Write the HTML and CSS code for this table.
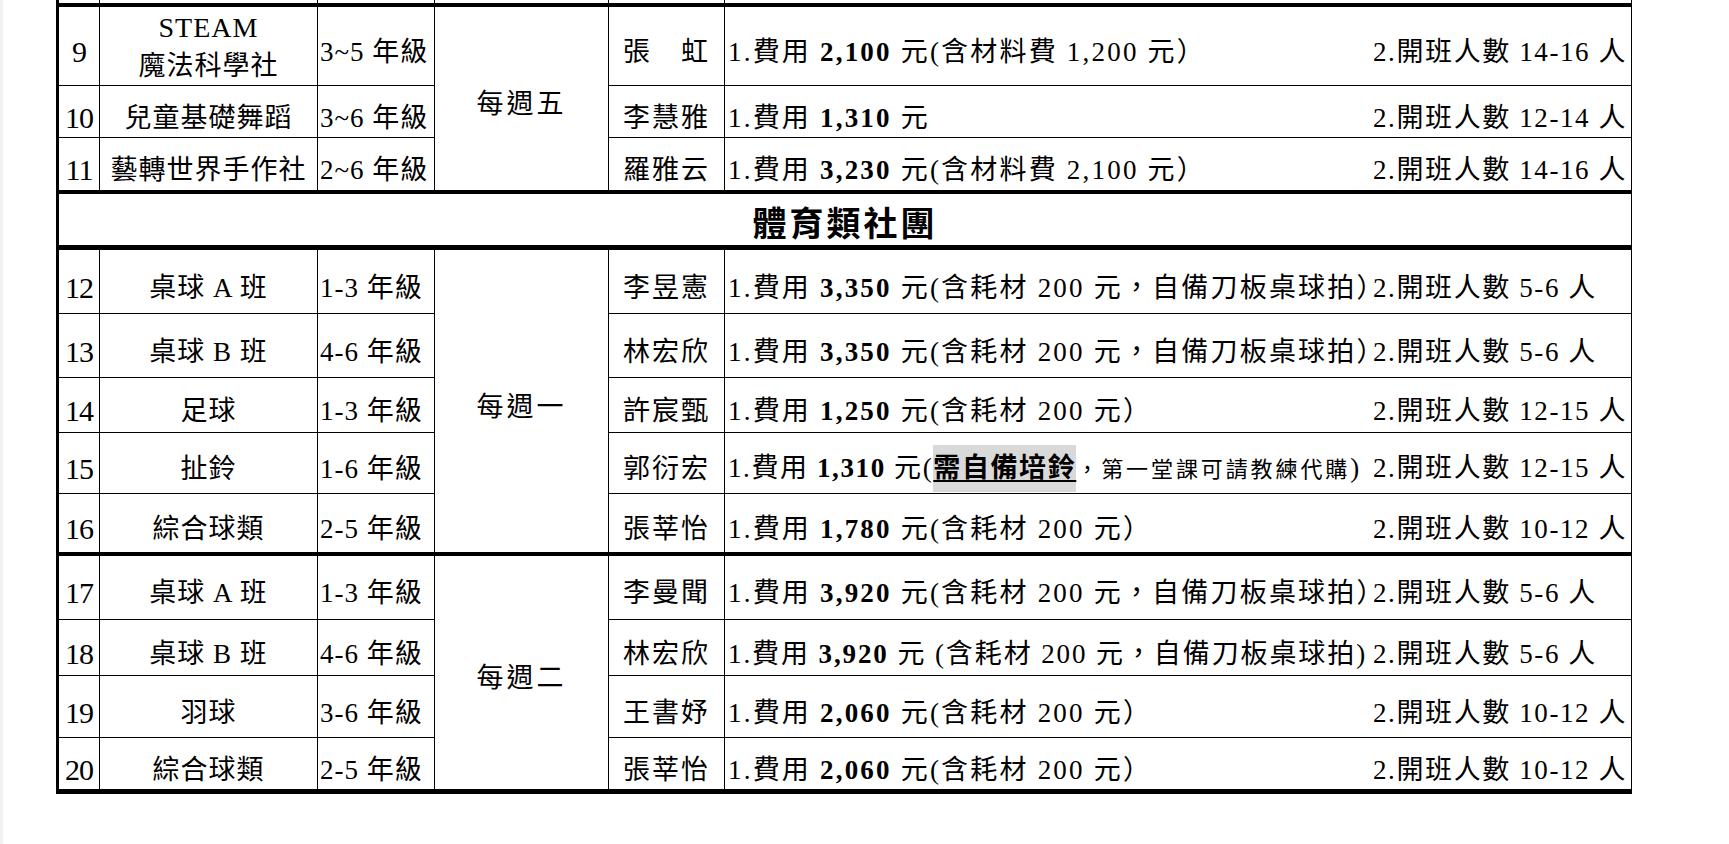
FILE: index.html
```html
<!DOCTYPE html>
<html lang="zh-Hant">
<head>
<meta charset="utf-8">
<title>社團一覽</title>
<link rel="stylesheet" href="styles.css">
</head>
<body>
<div class="page">
<table class="grid">
<colgroup>
<col class="c-no"><col class="c-name"><col class="c-grade"><col class="c-day"><col class="c-teacher"><col class="c-fee">
</colgroup>
<tbody>
<tr class="cut"><td></td><td></td><td></td><td></td><td></td><td></td></tr>

<tr class="thick-top h80">
<td class="no">9</td>
<td class="name two"><span class="latin-b">STEAM</span><br>魔法科學社</td>
<td class="grade">3~5 年級</td>
<td class="day" rowspan="3">每週五</td>
<td class="teacher">張　虹</td>
<td class="fee"><div class="fee-in"><span class="f1">1.費用 <b>2,100</b> 元(含材料費 1,200 元）</span><span class="f2">2.開班人數 14-16 人</span></div></td>
</tr>
<tr class="h52">
<td class="no">10</td>
<td class="name">兒童基礎舞蹈</td>
<td class="grade">3~6 年級</td>
<td class="teacher">李慧雅</td>
<td class="fee"><div class="fee-in"><span class="f1">1.費用 <b>1,310</b> 元</span><span class="f2">2.開班人數 12-14 人</span></div></td>
</tr>
<tr class="h54">
<td class="no">11</td>
<td class="name">藝轉世界手作社</td>
<td class="grade">2~6 年級</td>
<td class="teacher">羅雅云</td>
<td class="fee"><div class="fee-in"><span class="f1">1.費用 <b>3,230</b> 元(含材料費 2,100 元）</span><span class="f2">2.開班人數 14-16 人</span></div></td>
</tr>

<tr class="thick-top thick-bottom h56">
<td class="section" colspan="6">體育類社團</td>
</tr>

<tr class="h66">
<td class="no">12</td>
<td class="name">桌球 A 班</td>
<td class="grade">1-3 年級</td>
<td class="day" rowspan="5">每週一</td>
<td class="teacher">李昱憲</td>
<td class="fee"><div class="fee-in"><span class="f1">1.費用 <b>3,350</b> 元(含耗材 200 元，自備刀板桌球拍）</span><span class="f2">2.開班人數 5-6 人</span></div></td>
</tr>
<tr class="h64">
<td class="no">13</td>
<td class="name">桌球 B 班</td>
<td class="grade">4-6 年級</td>
<td class="teacher">林宏欣</td>
<td class="fee"><div class="fee-in"><span class="f1">1.費用 <b>3,350</b> 元(含耗材 200 元，自備刀板桌球拍）</span><span class="f2">2.開班人數 5-6 人</span></div></td>
</tr>
<tr class="h55">
<td class="no">14</td>
<td class="name">足球</td>
<td class="grade">1-3 年級</td>
<td class="teacher">許宸甄</td>
<td class="fee"><div class="fee-in"><span class="f1">1.費用 <b>1,250</b> 元(含耗材 200 元）</span><span class="f2">2.開班人數 12-15 人</span></div></td>
</tr>
<tr class="h61">
<td class="no">15</td>
<td class="name">扯鈴</td>
<td class="grade">1-6 年級</td>
<td class="teacher">郭衍宏</td>
<td class="fee"><div class="fee-in"><span class="f1 tight">1.費用 <b>1,310</b> 元(<span class="mark">需自備培鈴</span><span class="small">，第一堂課可請教練代購</span>)</span><span class="f2">2.開班人數 12-15 人</span></div></td>
</tr>
<tr class="h60">
<td class="no">16</td>
<td class="name">綜合球類</td>
<td class="grade">2-5 年級</td>
<td class="teacher">張莘怡</td>
<td class="fee"><div class="fee-in"><span class="f1">1.費用 <b>1,780</b> 元(含耗材 200 元）</span><span class="f2">2.開班人數 10-12 人</span></div></td>
</tr>

<tr class="thick-top h66">
<td class="no">17</td>
<td class="name">桌球 A 班</td>
<td class="grade">1-3 年級</td>
<td class="day last" rowspan="4">每週二</td>
<td class="teacher">李曼聞</td>
<td class="fee"><div class="fee-in"><span class="f1">1.費用 <b>3,920</b> 元(含耗材 200 元，自備刀板桌球拍）</span><span class="f2">2.開班人數 5-6 人</span></div></td>
</tr>
<tr class="h56">
<td class="no">18</td>
<td class="name">桌球 B 班</td>
<td class="grade">4-6 年級</td>
<td class="teacher">林宏欣</td>
<td class="fee"><div class="fee-in"><span class="f1 tight2">1.費用 <b>3,920</b> 元 (含耗材 200 元，自備刀板桌球拍)</span><span class="f2">2.開班人數 5-6 人</span></div></td>
</tr>
<tr class="h62">
<td class="no">19</td>
<td class="name">羽球</td>
<td class="grade">3-6 年級</td>
<td class="teacher">王書妤</td>
<td class="fee"><div class="fee-in"><span class="f1">1.費用 <b>2,060</b> 元(含耗材 200 元）</span><span class="f2">2.開班人數 10-12 人</span></div></td>
</tr>
<tr class="thick-bottom h54">
<td class="no">20</td>
<td class="name">綜合球類</td>
<td class="grade">2-5 年級</td>
<td class="teacher">張莘怡</td>
<td class="fee"><div class="fee-in"><span class="f1">1.費用 <b>2,060</b> 元(含耗材 200 元）</span><span class="f2">2.開班人數 10-12 人</span></div></td>
</tr>
</tbody>
</table>
</div>
</body>
</html>
```

FILE: styles.css
```css
html, body {
  margin: 0;
  padding: 0;
  background: #ffffff;
}
body {
  font-family: "Liberation Serif", "Noto Sans CJK TC", serif;
  color: #000;
  width: 1729px;
  height: 844px;
  overflow: hidden;
}
.page {
  height: 844px;
  border-left: 3px solid #f2f2f2;
  padding-left: 53px;
  box-sizing: border-box;
}
.grid {
  border-collapse: collapse;
  table-layout: fixed;
  width: 1574px;
  font-size: 27px;
  letter-spacing: 1px;
  line-height: 34px;
}
.c-no { width: 42px; }
.c-name { width: 218px; }
.c-grade { width: 117px; }
.c-day { width: 174px; }
.c-teacher { width: 116px; }
.c-fee { width: 907px; }

.grid td {
  border: 1px solid #000;
  padding: 12px 0 0 0;
  vertical-align: middle;
  white-space: nowrap;
  overflow: hidden;
  font-weight: 400;
}
.grid td:first-child {
  border-left: 3px solid #000;
}
.grid tr.cut td {
  border-top: none;
  padding: 0;
  height: 3px;
}
.grid tr.thick-top td {
  border-top: 4px solid #000;
}
.grid tr.thick-bottom td,
.grid td.day.last {
  border-bottom: 5px solid #000;
}
.h80 { height: 79px; }
.h52 { height: 52px; }
.h54 { height: 54px; }
.h55 { height: 55px; }
.h56 { height: 56px; }
.h60 { height: 60px; }
.h61 { height: 61px; }
.h62 { height: 62px; }
.h64 { height: 64px; }
.h66 { height: 66px; }

.no {
  text-align: center;
  font-size: 30px;
  letter-spacing: -1px;
}
.name {
  text-align: center;
}
.name.two {
  line-height: 38px;
  padding-top: 2px !important;
}
.latin-b {
  font-size: 28px;
}
.grade {
  text-align: left;
  padding-left: 2px !important;
}
.day {
  text-align: center;
  letter-spacing: 3px;
}
.teacher {
  text-align: center;
  letter-spacing: 2px;
}
.fee {
  padding-left: 3px !important;
}
.fee-in {
  display: flex;
  align-items: baseline;
}
.f1 {
  flex: none;
  width: 645px;
  overflow: visible;
  letter-spacing: 2.2px;
}
.f1.tight {
  letter-spacing: 1.6px;
}
.f1.tight2 {
  letter-spacing: 1.9px;
}
.f2 {
  flex: none;
  letter-spacing: 1.6px;
}
.fee b {
  font-weight: 700;
}
.mark {
  background: #d9d9d9;
  font-weight: 700;
  text-decoration: underline;
  text-underline-offset: 3px;
  padding: 8px 0 9px;
}
.small {
  font-size: 22px;
  letter-spacing: 2.9px;
}
.section {
  text-align: center;
  font-size: 34px;
  font-weight: 700 !important;
  letter-spacing: 3px;
}
```
